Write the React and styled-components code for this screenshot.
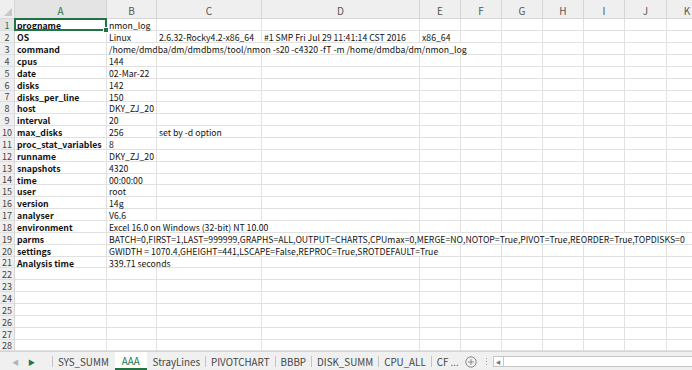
import React from "react";
import styled, { createGlobalStyle, css } from "styled-components";

const GlobalStyle = createGlobalStyle`
  html, body {
    margin: 0;
    padding: 0;
    background: #ffffff;
  }
  body {
    font-family: "Noto Sans CJK SC", "Liberation Sans", sans-serif;
  }
`;

const COLS = [92, 50, 105, 158, 41, 41, 41, 41, 41, 42, 41];
const LETTERS = ["A", "B", "C", "D", "E", "F", "G", "H", "I", "J", "K"];
const ROW_HEIGHTS = Array.from({ length: 28 }, (_, i) => (i % 7 === 6 ? 11 : 12));

const DATA = [
  ["progname", [{ c: 1, t: "nmon_log" }]],
  [
    "OS",
    [
      { c: 1, t: "Linux" },
      { c: 2, t: "2.6.32-Rocky4.2-x86_64" },
      { c: 3, t: "#1 SMP Fri Jul 29 11:41:14 CST 2016" },
      { c: 4, t: "x86_64" },
    ],
  ],
  ["command", [{ c: 1, span: 5, t: "/home/dmdba/dm/dmdbms/tool/nmon -s20 -c4320 -fT -m /home/dmdba/dm/nmon_log" }]],
  ["cpus", [{ c: 1, t: "144" }]],
  ["date", [{ c: 1, t: "02-Mar-22" }]],
  ["disks", [{ c: 1, t: "142" }]],
  ["disks_per_line", [{ c: 1, t: "150" }]],
  ["host", [{ c: 1, t: "DKY_ZJ_20" }]],
  ["interval", [{ c: 1, t: "20" }]],
  ["max_disks", [{ c: 1, t: "256" }, { c: 2, t: "set by -d option" }]],
  ["proc_stat_variables", [{ c: 1, t: "8" }]],
  ["runname", [{ c: 1, t: "DKY_ZJ_20" }]],
  ["snapshots", [{ c: 1, t: "4320" }]],
  ["time", [{ c: 1, t: "00:00:00" }]],
  ["user", [{ c: 1, t: "root" }]],
  ["version", [{ c: 1, t: "14g" }]],
  ["analyser", [{ c: 1, t: "V6.6" }]],
  ["environment", [{ c: 1, span: 3, t: "Excel 16.0 on Windows (32-bit) NT 10.00" }]],
  [
    "parms",
    [
      {
        c: 1,
        span: 10,
        t: "BATCH=0,FIRST=1,LAST=999999,GRAPHS=ALL,OUTPUT=CHARTS,CPUmax=0,MERGE=NO,NOTOP=True,PIVOT=True,REORDER=True,TOPDISKS=0",
      },
    ],
  ],
  ["settings", [{ c: 1, span: 4, t: "GWIDTH = 1070.4,GHEIGHT=441,LSCAPE=False,REPROC=True,SROTDEFAULT=True" }]],
  ["Analysis time", [{ c: 1, span: 2, t: "339.71 seconds" }]],
];

const TABS = ["SYS_SUMM", "AAA", "StrayLines", "PIVOTCHART", "BBBP", "DISK_SUMM", "CPU_ALL", "CF ..."];

const Window = styled.div`
  width: 692px;
  height: 370px;
  overflow: hidden;
  display: flex;
  flex-direction: column;
  background: #ffffff;
`;

const Sheet = styled.div`
  display: grid;
  grid-template-columns: 15px ${COLS.map((w) => `${w}px`).join(" ")};
  grid-template-rows: 19px ${ROW_HEIGHTS.map((h) => `${h}px`).join(" ")};
  flex: none;
`;

const Corner = styled.div`
  position: relative;
  background: #efefef;
  border-right: 1px solid #d6d6d6;
  border-bottom: 1px solid #d6d6d6;
  &::after {
    content: "";
    position: absolute;
    right: 2px;
    bottom: 2px;
    width: 0;
    height: 0;
    border-left: 8px solid transparent;
    border-bottom: 8px solid #c8c8c8;
  }
`;

const ColHead = styled.div`
  display: flex;
  align-items: center;
  justify-content: center;
  background: ${(p) => (p.$active ? "#e4e4e4" : "#efefef")};
  color: ${(p) => (p.$active ? "#217346" : "#555555")};
  border-right: 1px solid #d6d6d6;
  border-bottom: 1px solid ${(p) => (p.$active ? "#217346" : "#d6d6d6")};
  font-size: 10px;
  padding-top: 2px;
  box-sizing: border-box;
`;

const RowHead = styled.div`
  display: flex;
  align-items: center;
  justify-content: center;
  background: ${(p) => (p.$active ? "#e4e4e4" : "#efefef")};
  color: ${(p) => (p.$active ? "#217346" : "#444444")};
  border-right: 1px solid ${(p) => (p.$active ? "#217346" : "#d6d6d6")};
  border-bottom: 1px solid #dedede;
  font-size: 9px;
  padding-top: 1px;
  box-sizing: border-box;
`;

const Cell = styled.div`
  position: relative;
  grid-column: span ${(p) => p.$span || 1};
  display: flex;
  align-items: center;
  padding: 3px 0 0 2px;
  box-sizing: border-box;
  border-right: 1px solid #e1e1e1;
  border-bottom: 1px solid #e1e1e1;
  font-size: 8.7px;
  line-height: 10px;
  color: #111111;
  white-space: nowrap;
  overflow-x: clip;
  overflow-y: visible;
  font-weight: ${(p) => (p.$bold ? 700 : 400)};
  ${(p) =>
    p.$selected &&
    css`
      overflow: visible;
      z-index: 2;
      &::before {
        content: "";
        position: absolute;
        left: -1px;
        top: -1px;
        right: -1px;
        bottom: -1px;
        border: 2px solid #217346;
        pointer-events: none;
      }
      &::after {
        content: "";
        position: absolute;
        right: -3px;
        bottom: -3px;
        width: 4px;
        height: 4px;
        background: #217346;
        border: 1px solid #ffffff;
      }
    `}
`;

const TabBar = styled.div`
  flex: 1;
  display: flex;
  align-items: stretch;
  background: #f0f0f0;
  border-top: 1px solid #d4d4d4;
  font-size: 9.8px;
  color: #444444;
`;

const Nav = styled.div`
  width: 52px;
  display: flex;
  align-items: center;
  padding-left: 12px;
  gap: 9px;
  box-sizing: border-box;
  font-size: 7px;
`;

const Arrow = styled.span`
  color: ${(p) => (p.$on ? "#217346" : "#b5b5b5")};
`;

const Divider = styled.span`
  align-self: center;
  width: 1px;
  height: 11px;
  background: ${(p) => (p.$hidden ? "transparent" : "#c4c4c4")};
`;

const Tab = styled.div`
  display: flex;
  align-items: center;
  padding: 2px ${(p) => (p.$active ? 7 : 5)}px 0;
  margin: ${(p) => (p.$active ? "0 0 1px" : "0")};
  background: ${(p) => (p.$active ? "#ffffff" : "transparent")};
  color: ${(p) => (p.$active ? "#217346" : "#444444")};
  border-bottom: 2px solid ${(p) => (p.$active ? "#217346" : "transparent")};
  white-space: nowrap;
`;

const AddButton = styled.div`
  display: flex;
  align-items: center;
  padding: 0 5px 0 1px;
`;

const Dots = styled.div`
  display: flex;
  flex-direction: column;
  justify-content: center;
  gap: 2px;
  padding: 0 4px;
  & > span {
    width: 1px;
    height: 1px;
    background: #a0a0a0;
  }
`;

const Scroll = styled.div`
  flex: 1;
  align-self: center;
  height: 9px;
  margin-left: 2px;
  background: #ffffff;
  border: 1px solid #c6c6c6;
  border-right: none;
  display: flex;
  align-items: center;
`;

const ScrollArrow = styled.div`
  width: 9px;
  height: 100%;
  border-right: 1px solid #c6c6c6;
  display: flex;
  align-items: center;
  justify-content: center;
  font-size: 5px;
  color: #777777;
`;

function buildRow(entries) {
  const cells = [];
  let c = 1;
  while (c < COLS.length) {
    const e = entries.find((x) => x.c === c);
    if (e) {
      cells.push({ c, span: e.span || 1, t: e.t });
      c += e.span || 1;
    } else {
      cells.push({ c, span: 1, t: "" });
      c += 1;
    }
  }
  return cells;
}

const PlusIcon = () => (
  <svg width="12" height="12" viewBox="0 0 12 12">
    <circle cx="6" cy="6" r="5.2" fill="none" stroke="#888" strokeWidth="1" />
    <path d="M6 3.2v5.6M3.2 6h5.6" stroke="#888" strokeWidth="1" />
  </svg>
);

export default function App() {
  const rows = ROW_HEIGHTS.map((_, i) => {
    const d = DATA[i];
    const label = d ? d[0] : "";
    const rest = d ? buildRow(d[1]) : buildRow([]);
    return { label, rest };
  });

  return (
    <>
      <GlobalStyle />
      <Window>
        <Sheet>
          <Corner />
          {LETTERS.map((l, i) => (
            <ColHead key={l} $active={i === 0}>
              {l}
            </ColHead>
          ))}
          {rows.map((r, i) => (
            <React.Fragment key={i}>
              <RowHead $active={i === 0}>{i + 1}</RowHead>
              <Cell $bold $selected={i === 0}>
                {r.label}
              </Cell>
              {r.rest.map((cell) => (
                <Cell key={cell.c} $span={cell.span}>
                  {cell.t}
                </Cell>
              ))}
            </React.Fragment>
          ))}
        </Sheet>
        <TabBar>
          <Nav>
            <Arrow>◀</Arrow>
            <Arrow $on>▶</Arrow>
          </Nav>
          <Divider />
          {TABS.map((t, i) => (
            <React.Fragment key={t}>
              {i > 0 && <Divider $hidden={i === 1 || i === 2} />}
              <Tab $active={t === "AAA"}>{t}</Tab>
            </React.Fragment>
          ))}
          <AddButton>
            <PlusIcon />
          </AddButton>
          <Dots>
            <span />
            <span />
            <span />
          </Dots>
          <Scroll>
            <ScrollArrow>◀</ScrollArrow>
          </Scroll>
        </TabBar>
      </Window>
    </>
  );
}
